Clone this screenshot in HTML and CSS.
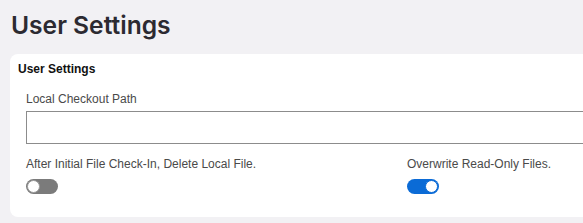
FILE: index.html
```
<!DOCTYPE html>
<html lang="en">
<head>
    <meta charset="UTF-8">
    <title>User Settings</title>
    <link rel="stylesheet" href="styles.css">
</head>
<body>
    <div class="page">
        <h1>User Settings</h1>

        <div class="card">
            <h2>User Settings</h2>
            <div class="section">
                <div class="field">
                    <label for="checkoutPath">Local Checkout Path</label>
                    <input type="text" id="checkoutPath">
                </div>

                <div class="options">
                    <div class="option">
                        <span class="option-label">After Initial File Check-In, Delete Local File.</span>
                        <span class="toggle"></span>
                    </div>
                    <div class="option">
                        <span class="option-label">Overwrite Read-Only Files.</span>
                        <span class="toggle on"></span>
                    </div>
                </div>
            </div>
        </div>
    </div>
</body>
</html>
```

FILE: styles.css
```
html, body {
    overflow: hidden;
}
body {
    margin: 0;
    background: #f2f1f4;
    font-family: "Liberation Sans", Arial, sans-serif;
    color: #4a4a4a;
}
.page {
    padding: 6px 10px;
    width: 778px;
}
h1 {
    font-family: Inter, "Noto Sans", sans-serif;
    font-size: 24.6px;
    font-weight: 600;
    color: #2c2a31;
    margin: 0 0 10px 1px;
    line-height: 38px;
}
.card {
    background: #fff;
    border-radius: 8px;
    padding: 8px;
}
.card h2 {
    font-size: 12px;
    font-weight: bold;
    color: #111;
    line-height: 14px;
    margin: 0;
}
.section {
    padding: 16px 8px 15px;
}
.field label {
    display: block;
    font-size: 12px;
    line-height: 14px;
    margin-bottom: 5px;
}
.field input {
    display: block;
    box-sizing: border-box;
    width: 100%;
    height: 33px;
    margin: 0;
    border: 1px solid #8c8c8c;
    border-radius: 0;
    background: #fff;
}
.options {
    display: grid;
    grid-template-columns: 1fr 1fr;
    column-gap: 16px;
    margin-top: 13px;
}
.option-label {
    display: block;
    font-size: 12px;
    line-height: 14px;
    margin-bottom: 8px;
}
.toggle {
    display: block;
    position: relative;
    width: 32px;
    height: 15px;
    border-radius: 8px;
    background: #7b7b7b;
}
.toggle::after {
    content: "";
    position: absolute;
    top: 1px;
    left: 1px;
    width: 11px;
    height: 11px;
    border-radius: 50%;
    background: #fff;
    border: 1px solid #9a9a9a;
}
.toggle.on {
    background: #0b6bd6;
}
.toggle.on::after {
    left: auto;
    right: 1px;
    border-color: #0b6bd6;
}
```
